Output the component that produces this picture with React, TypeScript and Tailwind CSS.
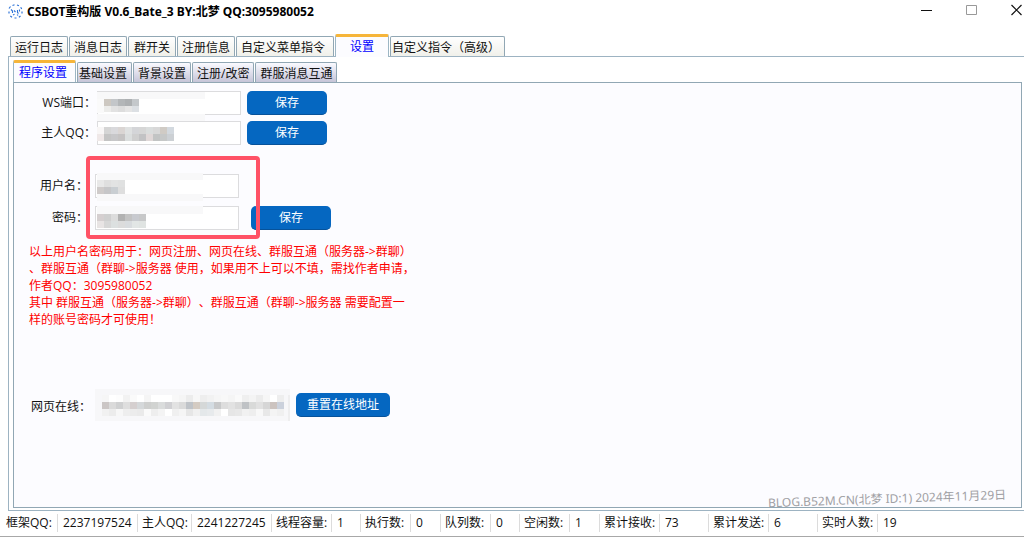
import React, { useState } from "react";

type Cell = [x: number, y: number, w: number, h: number, fill: string];

function Mosaic({ className, width, height, cells }: { className: string; width: number; height: number; cells: Cell[] }) {
  return (
    <svg
      aria-hidden="true"
      className={`pointer-events-none absolute ${className}`}
      width={width}
      height={height}
      viewBox={`0 0 ${width} ${height}`}
      shapeRendering="crispEdges"
    >
      {cells.map(([x, y, w, h, fill], i) => (
        <rect key={i} x={x} y={y} width={w} height={h} fill={fill} />
      ))}
    </svg>
  );
}

function strip(x: number, y: number, h: number, fills: string[]): Cell[] {
  return fills.map((fill, i) => [x + i * 7, y, 7, h, fill]);
}

const portCells: Cell[] = [
  [0, 0, 108, 7, "#f8f8f9"],
  [0, 7, 7, 14, "#fafafa"],
  ...strip(7, 7, 7, ["#cdc8c1", "#c3c6c9", "#b3b6b8", "#adb0b2", "#c4c8cb"]),
  ...strip(7, 14, 6, ["#ececea", "#e2e2e2", "#dddddd", "#e5e5e5", "#dce0e4"]),
  [0, 22, 108, 13, "#f8f8f9"],
];

const ownerCells: Cell[] = [
  [0, 0, 7, 7, "#f8f6f6"],
  [0, 7, 7, 7, "#efe8e8"],
  ...strip(7, 0, 7, ["#d5d5d5", "#d9d9dc", "#dad5d3", "#dfe1e1", "#d4d5d8", "#d6d6d6", "#dadddd", "#d8d8d8", "#d0cbc5", "#d3d9df"]),
  ...strip(7, 7, 7, ["#c4c4c4", "#c7c7c9", "#c5c3c3", "#dbdede", "#cfcfcf", "#c2c2c4", "#e0d8d8", "#c2c4c4", "#c6c8c8", "#ccd0d4"]),
];

const userCells: Cell[] = [
  [0, 0, 106, 7, "#f8f8f9"],
  ...strip(0, 7, 7, ["#e8e8e8", "#dfdfdf", "#e2e3e3", "#e0e1e1"]),
  ...strip(0, 14, 7, ["#cfcbca", "#c6c6c8", "#c9ced2", "#dedede"]),
  [0, 21, 106, 7, "#f8f8f9"],
];

const passwordCells: Cell[] = [
  [0, 0, 106, 8, "#f8f8f9"],
  ...strip(0, 8, 7, ["#d5cfd0", "#cfcfcf", "#dcdcdc", "#b2b2b2", "#c3c3c3", "#c8cacf", "#c7c8c9"]),
  ...strip(0, 15, 7, ["#e8e4e4", "#d7d7d7", "#dce0e0", "#dcdcdc", "#d9dcdf", "#e2e6e5", "#e0e4e2"]),
];

const urlCells: Cell[] = [
  [0, 0, 195, 32, "#f7f7f9"],
  ...strip(7, 6, 7, ["#f6f6f6", "#ffffff", "#fdfdfd", "#f2f2f2", "#fafafa", "#ffffff", "#f5f5f5", "#ffffff", "#ffffff", "#ffffff", "#f8f8f8", "#f5f5f5", "#ececec", "#f7f7f7", "#eeeeee", "#f2f2f2", "#f6f6f6", "#f8f8f8", "#f5f5f5", "#fafafa", "#efefef", "#f4f4f4", "#ececec", "#f6f6f6", "#ffffff", "#eeeeee"]),
  ...strip(7, 13, 7, ["#cbc6c5", "#dadada", "#cfd0d1", "#dedede", "#d5cfcf", "#d5d8da", "#cecfce", "#d1d3d1", "#dadcdc", "#d0d0d3", "#e2e2e2", "#dadada", "#bfc3c8", "#d4cbc2", "#d5d8d8", "#d4dce2", "#c8c9ca", "#dddddd", "#e2e2e2", "#dadada", "#bfc2c5", "#d9dad9", "#e1e1e1", "#d6d6d6", "#ccc3bf", "#cbd1dc"]),
  ...strip(7, 20, 7, ["#f1f1f1", "#ececec", "#f7f7f7", "#eeeeee", "#ececec", "#eaeaea", "#fafafa", "#eeeeee", "#f4f4f4", "#ffffff", "#f0f0f0", "#f5f5f5", "#e6e6e6", "#f0f0f0", "#e4e8ea", "#e7eaec", "#f1f1f1", "#ffffff", "#e6e6e6", "#e8e8e8", "#f1f1f1", "#eeeeee", "#f8f8f8", "#e8e8e8", "#f4f4f4", "#f0f0f0"]),
  [193, 6, 2, 26, "#eeeeef"],
];

const mainTabs = ["运行日志", "消息日志", "群开关", "注册信息", "自定义菜单指令", "设置", "自定义指令（高级）"];
const subTabs = ["程序设置", "基础设置", "背景设置", "注册/改密", "群服消息互通"];
const mainPads = ["px-1", "px-1", "px-[5px]", "px-1", "pl-1 pr-2", "px-[14px]", "pl-px pr-1"];
const subPads = ["pl-[5px] pr-2", "pl-px pr-1", "px-1", "px-1", "px-1"];

function TabStrip({ tabs, pads, active, onSelect, tone, label }: {
  tabs: string[];
  pads: string[];
  active: number;
  onSelect: (i: number) => void;
  tone: string;
  label: string;
}) {
  return (
    <div role="tablist" aria-label={label} className="relative flex items-end gap-px">
      {tabs.map((t, i) => (
        <button
          key={t}
          type="button"
          role="tab"
          aria-selected={i === active}
          onClick={() => onSelect(i)}
          className={`shrink-0 whitespace-nowrap rounded-t-[2px] border-x text-center leading-4 ${pads[i]} ${
            i === active
              ? "-mb-px h-[23px] border-t-[3px] border-[#9db6c4] border-t-[#f6b53a] bg-[#fcfcff] text-[#0000ff]"
              : `h-5 border-t border-[#91a7b4] pt-[2px] text-[#111] ${tone}`
          }`}
        >
          {t}
        </button>
      ))}
    </div>
  );
}

function BlueButton({ children, className }: { children: React.ReactNode; className: string }) {
  return (
    <button
      type="button"
      className={`h-6 shrink-0 rounded-[5px] border-b border-[#07529a] bg-[#0567c1] pt-px text-center leading-5 text-white ${className}`}
    >
      {children}
    </button>
  );
}

function Field({ id, label, labelClass, type = "text", children, action }: {
  id: string;
  label: string;
  labelClass: string;
  type?: string;
  children: React.ReactNode;
  action?: React.ReactNode;
}) {
  return (
    <div className="flex h-6 items-center">
      <label htmlFor={id} className={`shrink-0 text-right leading-4 ${labelClass}`}>{label}</label>
      <div className="relative h-6 w-36 shrink-0">
        <input id={id} type={type} className="block h-full w-full border border-[#dcdcde] bg-white px-2 outline-none" />
        {children}
      </div>
      {action}
    </div>
  );
}

const status: [string, string, string, string][] = [
  ["框架QQ:", "w-[57px]", "2237197524", "w-[80px]"],
  ["主人QQ:", "w-[54px]", "2241227245", "w-[80px]"],
  ["线程容量:", "w-[60px]", "1", "w-[29px]"],
  ["执行数:", "w-[50px]", "0", "w-[30px]"],
  ["队列数:", "w-[50px]", "0", "w-[29px]"],
  ["空闲数:", "w-[50px]", "1", "w-[30px]"],
  ["累计接收:", "w-[60px]", "73", "w-[49px]"],
  ["累计发送:", "w-[60px]", "6", "w-[49px]"],
  ["实时人数:", "w-[60px]", "19", "flex-1"],
];

export default function App() {
  const [mainTab, setMainTab] = useState(5);
  const [subTab, setSubTab] = useState(0);

  return (
    <div className="flex min-h-screen flex-col overflow-hidden border-b border-[#a8a8a8] bg-white font-['Open_Sans','Noto_Sans_CJK_SC',sans-serif] text-[12px] text-[#111] [text-spacing-trim:space-all]">
      <header className="flex h-[34px] items-start justify-between pl-2 pt-[3px]">
        <div className="flex items-center gap-1">
          <svg width="15" height="15" viewBox="0 0 15 15" fill="none" stroke="#2f74d8" aria-hidden="true">
            <path d="M1 4.5L2.5 2.5M4.5 1.5l2-.7M9 1l2 .7M12.7 3.2l1 1.8M14 7.5v2M12.5 12l-1.6 1.3M8.5 14h-2M4 13.3L2.3 12M1 9.5v-2" strokeWidth="1.2" />
            <path d="M3 5.5l1.5 1.5v2M6 6.5L7.5 8M9.5 6v2.5l1 1M11.5 5.5v2M5 11l1.5-.7M9 11.3l1.2-.6" strokeWidth="1.1" />
          </svg>
          <h1 className="whitespace-nowrap pt-px font-['Noto_Sans','Noto_Sans_CJK_SC',sans-serif] text-[12px] font-bold leading-4 text-black">CSBOT重构版 V0.6_Bate_3 BY:北梦 QQ:3095980052</h1>
        </div>
        <div className="flex gap-[34px] pr-[2px]">
          <button type="button" aria-label="最小化" className="h-[14px] w-[11px]">
            <svg width="11" height="14" viewBox="0 0 11 14" stroke="#111"><path d="M0 7.5h11" /></svg>
          </button>
          <button type="button" aria-label="最大化" className="h-[14px] w-[11px]">
            <svg width="11" height="14" viewBox="0 0 11 14" fill="none" stroke="#999"><path d="M.5 2.5h10v9H.5z" /></svg>
          </button>
          <button type="button" aria-label="关闭" className="h-[14px] w-[11px]">
            <svg width="11" height="14" viewBox="0 0 11 14" stroke="#111" strokeWidth="1.2"><path d="M.5 2l10 10M10.5 2l-10 10" /></svg>
          </button>
        </div>
      </header>

      <div className="flex flex-1 flex-col pl-2">
        <div className="pl-[2px]">
          <TabStrip label="主选项" tabs={mainTabs} pads={mainPads} active={mainTab} onSelect={setMainTab} tone="bg-linear-to-b from-white to-[#f0f0ea]" />
        </div>
        <section className="flex flex-1 flex-col border-b border-l border-t border-[#9db3c2] pb-[2px] pl-1 pr-[2px] pt-[3px]">
          <TabStrip label="设置选项" tabs={subTabs} pads={subPads} active={subTab} onSelect={setSubTab} tone="bg-linear-to-b from-[#fafaff] to-[#c6c5d8]" />
          <main className="relative flex-1 border border-[#91a7b4] bg-[#fcfcff] pt-2">
            <div className="flex flex-col gap-[6px]">
              <Field id="port" label="WS端口：" labelClass="w-[83px] pr-px" action={<BlueButton className="ml-[6px] w-20">保存</BlueButton>}>
                <Mosaic className="left-0 top-px" width={108} height={35} cells={portCells} />
              </Field>
              <Field id="owner" label="主人QQ：" labelClass="w-[83px] pr-px" action={<BlueButton className="ml-[6px] w-20">保存</BlueButton>}>
                <Mosaic className="left-0 top-[6px]" width={78} height={14} cells={ownerCells} />
              </Field>
            </div>

            <div className="relative mt-[29px] flex flex-col gap-2">
              <Field id="user" label="用户名：" labelClass="w-[81px] pr-[7px]">
                <Mosaic className="-top-px left-[2px]" width={106} height={28} cells={userCells} />
              </Field>
              <Field id="password" type="password" label="密码：" labelClass="w-[81px] pr-[7px]" action={<BlueButton className="ml-3 w-20">保存</BlueButton>}>
                <Mosaic className="left-[2px] top-0" width={106} height={22} cells={passwordCells} />
              </Field>
              <div className="pointer-events-none absolute -bottom-[9px] -top-[18px] left-[72px] w-[174px] rounded-[4px] border-4 border-[#ff5266]" />
            </div>

            <p className="mt-[13px] whitespace-nowrap pl-[15px] leading-[17px] text-[#ff0000]">
              以上用户名密码用于：网页注册、网页在线、群服互通（服务器-&gt;群聊）<br />
              、群服互通（群聊-&gt;服务器 使用，如果用不上可以不填，需找作者申请，<br />
              作者QQ：3095980052<br />
              其中 群服互通（服务器-&gt;群聊）、群服互通（群聊-&gt;服务器 需要配置一<br />
              样的账号密码才可使用！
            </p>

            <div className="mt-[61px] flex h-8 items-center">
              <label htmlFor="url" className="w-[81px] shrink-0 pr-1 pt-1 text-right leading-4">网页在线：</label>
              <div className="relative h-8 w-[195px] shrink-0">
                <input id="url" type="text" className="block h-full w-full bg-[#f7f7f9] px-2 outline-none" />
                <Mosaic className="left-0 top-0" width={195} height={32} cells={urlCells} />
              </div>
              <BlueButton className="ml-[6px] w-[94px]">重置在线地址</BlueButton>
            </div>
          </main>
        </section>
      </div>

      <footer className="relative flex h-[25px] items-start pt-[3px] leading-[18px]">
        {status.map(([label, lw, value, vw], i) => (
          <React.Fragment key={label}>
            <span className={`h-[18px] shrink-0 whitespace-nowrap ${i ? "border-l border-[#dcdcdc] pl-1" : "pl-[6px]"} ${lw}`}>{label}</span>
            <span className={`h-[18px] shrink-0 whitespace-nowrap border-l border-[#dcdcdc] pl-[5px] ${vw}`}>{value}</span>
          </React.Fragment>
        ))}
        <div className="pointer-events-none absolute -top-5 right-[18px] -rotate-2 whitespace-nowrap font-['Noto_Sans','Noto_Sans_CJK_SC',sans-serif] text-[12px] leading-4 text-[#a0a0a4]">
          BLOG.B52M.CN(北梦 ID:1) 2024年11月29日
        </div>
      </footer>
    </div>
  );
}
